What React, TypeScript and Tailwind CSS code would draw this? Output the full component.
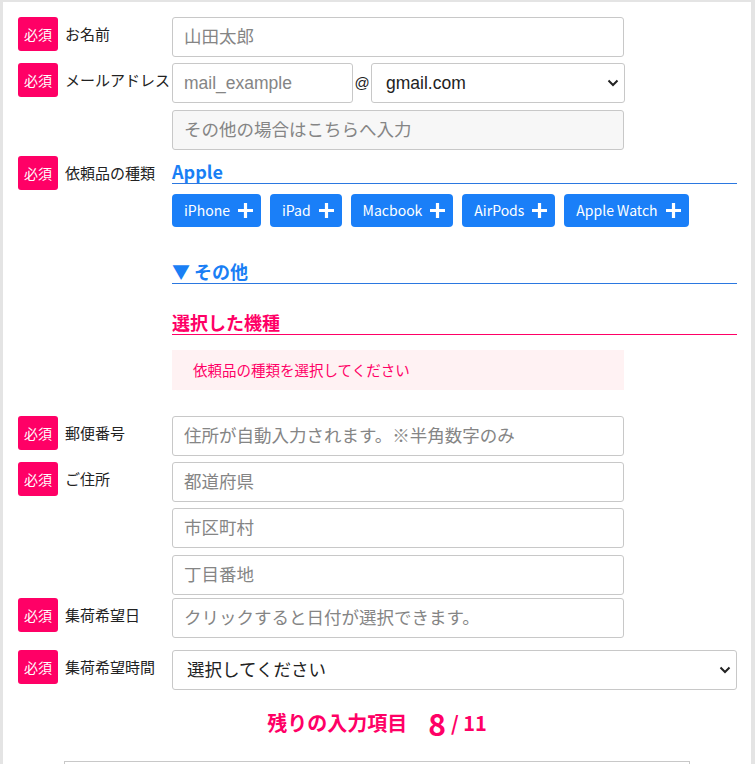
import type { ReactNode } from 'react'

const JP = "font-['Noto_Sans_CJK_JP','Noto_Sans',sans-serif]"
const INPUT_FONT = "font-['Liberation_Sans','Noto_Sans_CJK_JP',sans-serif]"

function Badge() {
  return (
    <span className={`flex h-[34px] w-[40px] shrink-0 items-center justify-center rounded-[3px] bg-[#ff0066] text-[14px] text-white ${JP}`}>
      必須
    </span>
  )
}

function Row({ label, children, className = '' }: { label: string; children: ReactNode; className?: string }) {
  return (
    <div className={`flex pl-[15px] ${className}`}>
      <div className="flex h-[34px] w-[154px] shrink-0 items-center">
        <Badge />
        <span className={`ml-[7px] whitespace-nowrap text-[15px] text-[#222] ${JP}`}>{label}</span>
      </div>
      <div className="flex min-w-0 flex-1 flex-col">{children}</div>
    </div>
  )
}

function TextInput({ placeholder, className = '', disabled = false }: { placeholder: string; className?: string; disabled?: boolean }) {
  return (
    <input
      type="text"
      placeholder={placeholder}
      className={`h-[40px] rounded-[3px] border border-[#c8c8c8] px-[11px] text-[17.5px] text-[#222] outline-none placeholder:text-[#858585] ${INPUT_FONT} ${disabled ? 'bg-[#f7f7f7]' : 'bg-white'} ${className}`}
    />
  )
}

function Select({ value, className = '' }: { value: string; className?: string }) {
  return (
    <div className={`relative h-[40px] ${className}`}>
      <select
        defaultValue={value}
        className={`h-full w-full appearance-none rounded-[3px] border border-[#c8c8c8] bg-white pl-[14px] text-[17.5px] text-[#222] outline-none ${INPUT_FONT}`}
      >
        <option>{value}</option>
      </select>
      <svg className="pointer-events-none absolute right-[6px] top-1/2 -translate-y-1/2" width="12" height="8" viewBox="0 0 12 8">
        <path d="M1.5 1.5 L6 6 L10.5 1.5" fill="none" stroke="#222" strokeWidth="2" />
      </svg>
    </div>
  )
}

function Plus() {
  return (
    <svg width="17" height="17" viewBox="0 0 17 17">
      <path d="M8.5 1 V16 M1 8.5 H16" stroke="white" strokeWidth="3.2" />
    </svg>
  )
}

function Heading({ children, pink = false, className = '' }: { children: ReactNode; pink?: boolean; className?: string }) {
  return (
    <div
      className={`h-[25px] border-b text-[18px] font-bold leading-[24px] ${JP} ${
        pink ? 'border-[#ff0066] text-[#ff0066]' : 'border-[#2b78e0] text-[#1a7ff5]'
      } ${className}`}
    >
      {children}
    </div>
  )
}

const devices = ['iPhone', 'iPad', 'Macbook', 'AirPods', 'Apple Watch']

export default function App() {
  return (
    <div className="min-h-screen bg-[#e4e4e4] pl-[3px] pt-[2px] pr-[4px]">
      <div className="h-[762px] overflow-hidden bg-white pt-[15px]">
        <Row label="お名前">
          <TextInput placeholder="山田太郎" className="w-[452px]" />
        </Row>

        <Row label="メールアドレス" className="mt-[6px]">
          <div className="flex items-center">
            <TextInput placeholder="mail_example" className="w-[181px]" />
            <span className={`w-[18px] text-center text-[15px] text-[#222] ${INPUT_FONT}`}>@</span>
            <Select value="gmail.com" className="w-[254px]" />
          </div>
          <TextInput placeholder="その他の場合はこちらへ入力" className="mt-[7px] w-[452px]" disabled />
        </Row>

        <Row label="依頼品の種類" className="mt-[6px]">
          <div className="pr-[14px]">
            <Heading className="mt-[3px]">Apple</Heading>
            <div className="mt-[10px] flex gap-[9px]">
              {devices.map(d => (
                <button
                  key={d}
                  className={`flex h-[33px] items-center gap-[7px] rounded-[4px] bg-[#1a7ff8] pl-[12px] pr-[7px] text-[14px] text-white ${JP}`}
                >
                  {d}
                  <Plus />
                </button>
              ))}
            </div>
            <Heading className="mt-[32px]">▼ その他</Heading>
            <Heading pink className="mt-[26px]">選択した機種</Heading>
          </div>
          <div className={`mt-[15px] flex h-[40px] w-[452px] items-center bg-[#fff2f3] pl-[21px] text-[14.5px] text-[#ff0066] ${JP}`}>
            依頼品の種類を選択してください
          </div>
        </Row>

        <Row label="郵便番号" className="mt-[26px]">
          <TextInput placeholder="住所が自動入力されます。※半角数字のみ" className="w-[452px]" />
        </Row>

        <Row label="ご住所" className="mt-[6px]">
          <TextInput placeholder="都道府県" className="w-[452px]" />
          <TextInput placeholder="市区町村" className="mt-[6px] w-[452px]" />
          <TextInput placeholder="丁目番地" className="mt-[7px] w-[452px]" />
        </Row>

        <Row label="集荷希望日" className="mt-[3px]">
          <TextInput placeholder="クリックすると日付が選択できます。" className="w-[452px]" />
        </Row>

        <Row label="集荷希望時間" className="mt-[12px]">
          <div className="pr-[14px]">
            <Select value="選択してください" className="w-full" />
          </div>
        </Row>

        <div className={`mt-[8px] flex h-[50px] items-center justify-center font-bold text-[#ff0066] ${JP}`}>
          <span className="text-[20px]">残りの入力項目</span>
          <span className="ml-[21px] text-[30px] leading-none">8</span>
          <span className="ml-[5px] text-[20px]">/ 11</span>
        </div>

        <div className="mx-auto mt-[13px] h-[40px] w-[626px] border border-[#c8c8c8]" />
      </div>
    </div>
  )
}
